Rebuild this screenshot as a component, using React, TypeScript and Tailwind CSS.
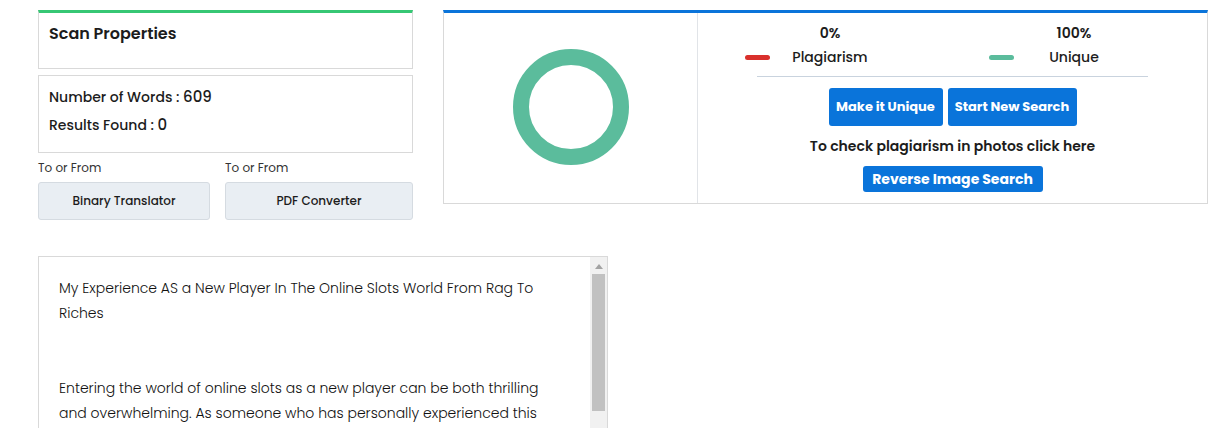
import React from 'react';

const font = { fontFamily: 'Poppins, Inter, "Noto Sans", sans-serif' };

// 左侧统计卡片
const ScanProperties: React.FC = () => (
  <div className="w-[375px] flex flex-col">
    <div className="h-[59px] border border-[#d9d9d9] border-t-[3px] border-t-[#36c774] px-[10px] pt-[11px]">
      <h3 className="text-[16px] font-semibold text-[#1c1c1c] leading-[20px]">Scan Properties</h3>
    </div>
    <div className="mt-[6px] h-[78px] border border-[#d9d9d9] px-[10px] pt-[11px] text-[14px] text-[#1c1c1c] font-medium">
      <p className="leading-[20px]">
        Number of Words : <span className="text-[15px]">609</span>
      </p>
      <p className="leading-[20px] mt-[8px]">
        Results Found : <span className="text-[15px]">0</span>
      </p>
    </div>
    <div className="mt-[7px] flex gap-[15px]">
      <div className="w-[172px]">
        <p className="text-[12px] text-[#333] leading-[16px]">To or From</p>
        <button className="mt-[6px] w-full h-[38px] rounded-[3px] bg-[#e9eef3] border border-[#d5dbe1] text-[12px] font-medium text-[#1c1c1c]">
          Binary Translator
        </button>
      </div>
      <div className="w-[188px]">
        <p className="text-[12px] text-[#333] leading-[16px]">To or From</p>
        <button className="mt-[6px] w-full h-[38px] rounded-[3px] bg-[#e9eef3] border border-[#d5dbe1] text-[12px] font-medium text-[#1c1c1c]">
          PDF Converter
        </button>
      </div>
    </div>
  </div>
);

// 结果面板
const ResultPanel: React.FC = () => (
  <div className="ml-[30px] w-[765px] h-[194px] border border-[#d9d9d9] border-t-[3px] border-t-[#0a74da] flex">
    <div className="w-[254px] border-r border-[#e1e4e8] flex items-center justify-center">
      <svg width="118" height="118" viewBox="0 0 118 118" className="mt-[-2px]">
        <circle cx="59" cy="59" r="50" fill="none" stroke="#5bbc9c" strokeWidth="16" />
      </svg>
    </div>
    <div className="flex-1 flex flex-col items-center">
      <div className="w-[391px] flex flex-col">
        <div className="flex ml-[-12px] pt-[11px]">
          {[
            { pct: '0%', label: 'Plagiarism', color: 'bg-[#d9302c]' },
            { pct: '100%', label: 'Unique', color: 'bg-[#5bbc9c]' },
          ].map((item) => (
            <div key={item.label} className="w-[244px] shrink-0 flex flex-col">
              <div className="ml-[25px] w-[120px] text-center text-[14px] font-semibold text-[#1c1c1c] leading-[18px]">
                {item.pct}
              </div>
              <div className="mt-[5px] flex items-center">
                <span className={`w-[25px] h-[5px] rounded-full ${item.color}`} />
                <span className="w-[120px] text-center text-[14px] font-medium text-[#1c1c1c] leading-[20px]">
                  {item.label}
                </span>
              </div>
            </div>
          ))}
        </div>
        <div className="mt-[9px] h-px bg-[#c9d3de]" />
      </div>
      <div className="mt-[11px] flex gap-[5px]">
        <button className="w-[114px] h-[38px] rounded-[3px] bg-[#0a74da] text-white text-[13px] font-bold">
          Make it Unique
        </button>
        <button className="w-[129px] h-[38px] rounded-[3px] bg-[#0a74da] text-white text-[13px] font-bold">
          Start New Search
        </button>
      </div>
      <p className="mt-[10px] text-[14px] font-semibold text-[#1c1c1c] leading-[20px]">
        To check plagiarism in photos click here
      </p>
      <button className="mt-[10px] w-[180px] h-[26px] rounded-[3px] bg-[#0a74da] text-white text-[14px] font-bold">
        Reverse Image Search
      </button>
    </div>
  </div>
);

// 文本框
const TextBox: React.FC = () => {
  const lines = [
    'My Experience AS a New Player In The Online Slots World From Rag To',
    'Riches',
    '',
    '',
    'Entering the world of online slots as a new player can be both thrilling',
    'and overwhelming. As someone who has personally experienced this',
  ];
  return (
    <div className="mt-[36px] w-[570px] h-[200px] border border-[#d9d9d9] flex overflow-hidden">
      <div className="flex-1 pl-[20px] pt-[19px] text-[14px] font-light text-[#111] leading-[25px]">
        {lines.map((l, i) => (
          <div key={i} className="whitespace-nowrap h-[25px]">
            {l}
          </div>
        ))}
      </div>
      <div className="w-[17px] bg-[#f1f1f1] flex flex-col items-center">
        <svg width="8" height="5" viewBox="0 0 8 5" className="mt-[7px]">
          <polygon points="4,0 8,5 0,5" fill="#a3a3a3" />
        </svg>
        <div className="mt-[5px] w-[13px] h-[137px] bg-[#c1c1c1]" />
      </div>
    </div>
  );
};

export default function App() {
  return (
    <div className="w-[1232px] h-[428px] bg-white overflow-hidden pl-[38px] pt-[10px]" style={font}>
      <div className="flex items-start">
        <ScanProperties />
        <ResultPanel />
      </div>
      <TextBox />
    </div>
  );
}
